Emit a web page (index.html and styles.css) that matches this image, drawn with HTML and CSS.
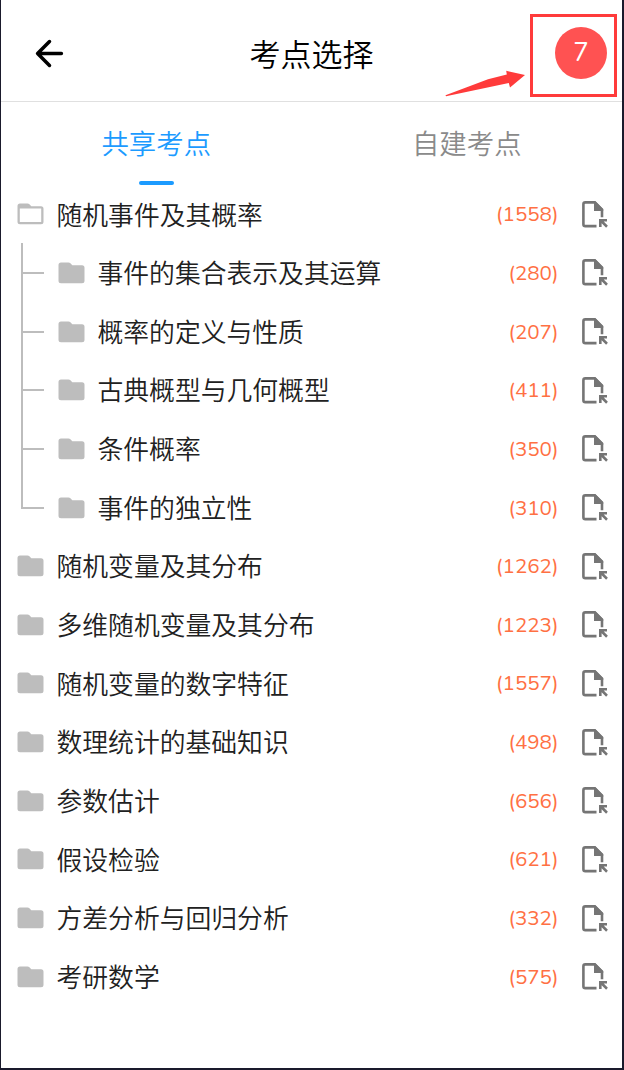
FILE: index.html
```html
<!DOCTYPE html>
<html lang="zh-CN">
<head>
<meta charset="utf-8">
<title>考点选择</title>
<link rel="stylesheet" href="styles.css">
</head>
<body>
<svg class="symbols" aria-hidden="true">
  <symbol id="folder" viewBox="0 0 27 22"><path d="M3 .5H10.5Q11.7 .5 12.4 1.3L14.3 3.3H24Q26.5 3.3 26.5 5.8V18.7Q26.5 21.2 24 21.2H3Q.5 21.2 .5 18.7V3Q.5 .5 3 .5Z" fill="#bdbdbd"/></symbol>
  <symbol id="folder-open" viewBox="0 0 27 22"><path fill-rule="evenodd" d="M3 .5H10.5Q11.7 .5 12.4 1.3L14.3 3.3H24Q26.5 3.3 26.5 5.8V18.7Q26.5 21.2 24 21.2H3Q.5 21.2 .5 18.7V3Q.5 .5 3 .5ZM2.8 5.6V18.9H24.2V5.6Z" fill="#bdbdbd"/></symbol>
  <symbol id="doc" viewBox="0 0 26 27"><path d="M14.5 25.1H3.3Q1.4 25.1 1.4 23.2V3.3Q1.4 1.4 3.3 1.4H12.8L20 8.6V16.3" fill="none" stroke="#757575" stroke-width="2.6"/><path d="M12 .5H13.6L21.2 8.2V10H12ZM17 18.1H25V20.6H21.7L25.9 24.8L24.1 26.7L19.6 22.3V26H17Z" fill="#757575"/></symbol>
</svg>
<div class="screen">
  <header class="header">
    <svg class="back" viewBox="0 0 28 28"><path d="M14 2.5L2.5 14L14 25.5M2.5 14H25.5" fill="none" stroke="#000" stroke-width="3.4" stroke-linecap="round" stroke-linejoin="round"/></svg>
    <h1 class="title">考点选择</h1>
    <div class="badge">7</div>
    <div class="highlight"></div>
    <svg class="pointer" viewBox="0 0 81 27"><path d="M.5 25.3L43 9.2L61.8 4.6L61.2 .8L80 4.9L65 17.5L63.8 13L1 26.2Z" fill="#ff3b3b"/></svg>
  </header>
  <nav class="tabs"><a class="tab active">共享考点</a><a class="tab">自建考点</a></nav>
  <main class="list">
    <div class="row"><svg class="folder"><use href="#folder-open"/></svg><span class="name">随机事件及其概率</span><span class="count">(1558)</span><svg class="doc"><use href="#doc"/></svg></div>
    <div class="children">
      <div class="row"><svg class="folder"><use href="#folder"/></svg><span class="name">事件的集合表示及其运算</span><span class="count">(280)</span><svg class="doc"><use href="#doc"/></svg></div>
      <div class="row"><svg class="folder"><use href="#folder"/></svg><span class="name">概率的定义与性质</span><span class="count">(207)</span><svg class="doc"><use href="#doc"/></svg></div>
      <div class="row"><svg class="folder"><use href="#folder"/></svg><span class="name">古典概型与几何概型</span><span class="count">(411)</span><svg class="doc"><use href="#doc"/></svg></div>
      <div class="row"><svg class="folder"><use href="#folder"/></svg><span class="name">条件概率</span><span class="count">(350)</span><svg class="doc"><use href="#doc"/></svg></div>
      <div class="row"><svg class="folder"><use href="#folder"/></svg><span class="name">事件的独立性</span><span class="count">(310)</span><svg class="doc"><use href="#doc"/></svg></div>
    </div>
    <div class="row"><svg class="folder"><use href="#folder"/></svg><span class="name">随机变量及其分布</span><span class="count">(1262)</span><svg class="doc"><use href="#doc"/></svg></div>
    <div class="row"><svg class="folder"><use href="#folder"/></svg><span class="name">多维随机变量及其分布</span><span class="count">(1223)</span><svg class="doc"><use href="#doc"/></svg></div>
    <div class="row"><svg class="folder"><use href="#folder"/></svg><span class="name">随机变量的数字特征</span><span class="count">(1557)</span><svg class="doc"><use href="#doc"/></svg></div>
    <div class="row"><svg class="folder"><use href="#folder"/></svg><span class="name">数理统计的基础知识</span><span class="count">(498)</span><svg class="doc"><use href="#doc"/></svg></div>
    <div class="row"><svg class="folder"><use href="#folder"/></svg><span class="name">参数估计</span><span class="count">(656)</span><svg class="doc"><use href="#doc"/></svg></div>
    <div class="row"><svg class="folder"><use href="#folder"/></svg><span class="name">假设检验</span><span class="count">(621)</span><svg class="doc"><use href="#doc"/></svg></div>
    <div class="row"><svg class="folder"><use href="#folder"/></svg><span class="name">方差分析与回归分析</span><span class="count">(332)</span><svg class="doc"><use href="#doc"/></svg></div>
    <div class="row"><svg class="folder"><use href="#folder"/></svg><span class="name">考研数学</span><span class="count">(575)</span><svg class="doc"><use href="#doc"/></svg></div>
  </main>
</div>
</body>
</html>
```

FILE: styles.css
```css
* { box-sizing: border-box; }
body { margin: 0; font-family: "Noto Sans CJK SC DemiLight", "Noto Sans CJK SC", sans-serif; font-weight: 350; }
.symbols { display: none; }
.screen {
  width: 624px; height: 1070px; overflow: hidden;
  background: #fff; color: #212121;
  border: solid #1a1a2c; border-width: 0 2px 2px 1px;
}
.header {
  position: relative; height: 102px; padding: 5px 15px 0 34px;
  display: grid; grid-template-columns: 52px 1fr 52px; align-items: center;
  border-bottom: 1px solid #e0e0e0;
}
.back { width: 29px; height: 29px; }
.title { margin: 0; padding-right: 19px; text-align: center; font-size: 31px; font-weight: 400; color: #000; line-height: 46px; }
.badge {
  width: 52px; height: 52px; border-radius: 50%;
  background: #ff5252; color: #fff; text-align: center;
  font: 400 26px/51px "Nunito", "Lato", sans-serif;
}
.highlight { position: absolute; left: 529px; top: 14px; width: 87px; height: 83px; border: 3px solid #ff3b3b; }
.pointer { position: absolute; left: 444px; top: 70px; width: 81px; height: 27px; }
.tabs { display: grid; grid-template-columns: 1fr 1fr; height: 83px; }
.tab {
  display: flex; flex-direction: column; justify-content: space-between; align-items: center;
  padding-top: 20px; font-size: 27.4px; line-height: 40px; color: #8a8a8a;
}
.active { color: #1c9bff; }
.active::after { content: ""; width: 35px; height: 4px; border-radius: 2px; background: #1c9bff; }
.row { display: flex; align-items: center; height: 58.65px; padding: 0 14px 0 16px; }
.folder { width: 27px; height: 22px; margin-right: 12.5px; }
.name { flex: 1; padding-bottom: 1.5px; font-size: 25.8px; line-height: 38px; white-space: nowrap; }
.count { font: 400 20.6px/30px "Nunito", "Lato", sans-serif; color: #ff7043; }
.doc { width: 26px; height: 27px; margin-left: 23.5px; }
.children { position: relative; }
.children .row { padding-left: 57px; position: relative; }
.children .row::before {
  content: ""; position: absolute; left: 20px; top: -1px; width: 21px; height: 50%;
  border: solid #bdbdbd; border-width: 0 0 2px 2px;
}
.children .row:not(:last-child)::after {
  content: ""; position: absolute; left: 20px; top: 45%; width: 2px; height: 55%; background: #bdbdbd;
}
```
